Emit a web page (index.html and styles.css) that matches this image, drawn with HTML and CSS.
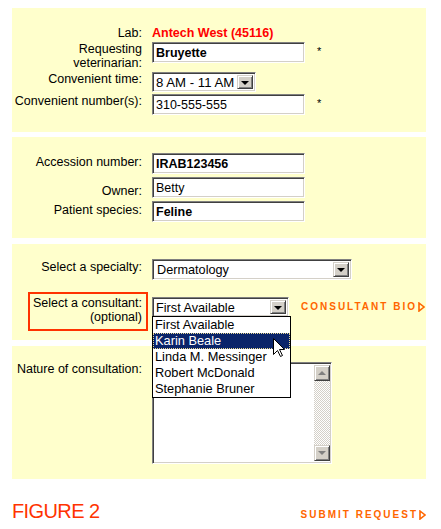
FILE: index.html
```html
<!DOCTYPE html>
<html>
<head>
<meta charset="utf-8">
<link rel="stylesheet" href="styles.css">
</head>
<body>
<div class="page">
  <div class="panel p1">
    <div class="row r-lab">
      <div class="lbl">Lab:</div>
      <div class="lab-val">Antech West (45116)</div>
    </div>
    <div class="row r-vet">
      <div class="lbl">Requesting<br>veterinarian:</div>
      <div class="fld"><input class="tb w153 bold" type="text" value="Bruyette" readonly><span class="req">*</span></div>
    </div>
    <div class="row r-time">
      <div class="lbl">Convenient time:</div>
      <div class="fld"><div class="sel w104"><span class="sel-txt">8 AM - 11 AM</span><span class="sel-btn"><i class="tri-down"></i></span></div></div>
    </div>
    <div class="row r-phone">
      <div class="lbl">Convenient number(s):</div>
      <div class="fld"><input class="tb w153" type="text" value="310-555-555" readonly><span class="req">*</span></div>
    </div>
  </div>

  <div class="panel p2">
    <div class="row r-in">
      <div class="lbl off2">Accession number:</div>
      <div class="fld"><input class="tb w153 bold" type="text" value="IRAB123456" readonly></div>
    </div>
    <div class="row r-in gap3">
      <div class="lbl off7">Owner:</div>
      <div class="fld"><input class="tb w153" type="text" value="Betty" readonly></div>
    </div>
    <div class="row r-in gap3">
      <div class="lbl off2">Patient species:</div>
      <div class="fld"><input class="tb w153 bold" type="text" value="Feline" readonly></div>
    </div>
  </div>

  <div class="panel p3">
    <div class="row r-spec">
      <div class="lbl off1">Select a specialty:</div>
      <div class="fld"><div class="sel w200 h21"><span class="sel-txt">Dermatology</span><span class="sel-btn"><i class="tri-down"></i></span></div></div>
    </div>
    <div class="row r-cons">
      <div class="lbl boxed">Select a consultant:<br>(optional)</div>
      <div class="fld cons-fld">
        <div class="sel w137 open">
          <span class="sel-txt">First Available</span><span class="sel-btn"><i class="tri-down"></i></span>
          <ul class="dropdown">
            <li>First Available</li>
            <li class="hl">Karin Beale</li>
            <li>Linda M. Messinger</li>
            <li>Robert McDonald</li>
            <li>Stephanie Bruner</li>
            <svg class="cursor" width="13" height="20" viewBox="0 0 13 20"><path d="M0.5 0.5 L0.5 16.5 L4.5 12.5 L7.5 18.5 L9.5 17.5 L6.5 11.5 L11.5 11.5 Z" fill="#fff" stroke="#000" stroke-width="1" stroke-linejoin="miter"/></svg>
          </ul>
        </div>
        <a class="olink bio">CONSULTANT BIO<svg class="arr" width="7" height="10" viewBox="0 0 7 10"><polygon points="1,1 6,5 1,9" fill="none" stroke="#ff6600" stroke-width="1.6"/></svg></a>
      </div>
    </div>
  </div>

  <div class="panel p4">
    <div class="row">
      <div class="lbl">Nature of consultation:</div>
      <div class="fld">
        <div class="ta">
          <div class="ta-body"></div>
          <div class="sb">
            <span class="sb-btn"><i class="tri-up-g"></i></span>
            <span class="sb-track"></span>
            <span class="sb-btn"><i class="tri-down-g"></i></span>
          </div>
        </div>
      </div>
    </div>
  </div>

  <div class="footer">
    <div class="fig">FIGURE 2</div>
    <a class="olink submit">SUBMIT REQUEST<svg class="arr" width="7" height="10" viewBox="0 0 7 10"><polygon points="1,1 6,5 1,9" fill="none" stroke="#ff6600" stroke-width="1.6"/></svg></a>
  </div>
</div>
</body>
</html>
```

FILE: styles.css
```css
html, body {
  margin: 0;
  padding: 0;
  background: #ffffff;
}
body {
  font-family: "Liberation Sans", Arial, sans-serif;
  font-size: 12.5px;
  line-height: 14px;
  color: #000;
}
.page {
  width: 414px;
  padding: 8px 0 0 12px;
}
.panel {
  background: #ffffcc;
  width: 414px;
  box-sizing: border-box;
}
.p1 { padding: 17px 0 17px; }
.p2 { margin-top: 5px; padding: 16px 0 16px; }
.p3 { margin-top: 6px; padding: 15px 0 9px; }
.p4 { margin-top: 6px; padding: 16px 0 15px; }

.row {
  display: flex;
  align-items: flex-start;
  gap: 4px;
}
.r-lab { padding-top: 1px; }
.r-vet { margin-top: 2px; }
.r-time { margin-top: 2px; }
.r-phone { margin-top: 2px; }
.gap3 { margin-top: 3px; }
.r-cons { margin-top: 12px; }

.lbl {
  width: 136px;
  flex: none;
  box-sizing: border-box;
  text-align: right;
  padding-right: 6px;
  white-space: nowrap;
}
.off1 { padding-top: 1px; }
.off2 { padding-top: 2px; }
.off7 { padding-top: 7px; }
.lbl.boxed {
  width: 120px;
  margin-left: 16px;
  border: 2px solid #ff3300;
  padding: 2px 4px 5px 0;
}

.lab-val {
  color: #ff0000;
  font-weight: bold;
}

.fld {
  display: flex;
  align-items: center;
}
.req {
  margin-left: 12px;
  font-size: 11px;
  line-height: 14px;
  position: relative;
  top: -2px;
}

/* inset text box */
.tb {
  box-sizing: border-box;
  height: 21px;
  margin: 0;
  padding: 1px 2px 0 3px;
  border: 1px solid;
  border-color: #808080 #ffffff #ffffff #808080;
  box-shadow: inset 1px 1px 0 #404040, inset -1px -1px 0 #d4d0c8;
  background: #fff;
  font-family: "Liberation Sans", Arial, sans-serif;
  font-size: 12.5px;
  color: #000;
  outline: none;
}
.tb.bold { font-weight: bold; }
.w153 { width: 153px; }

/* select */
.sel {
  position: relative;
  box-sizing: border-box;
  height: 20px;
  display: flex;
  align-items: stretch;
  border: 1px solid;
  border-color: #808080 #ffffff #ffffff #808080;
  box-shadow: inset 1px 1px 0 #404040, inset -1px -1px 0 #d4d0c8;
  background: #fff;
  padding: 2px;
  font-size: 12.7px;
}
.w104 { width: 104px; }
.w200 { width: 200px; }
.w137 { width: 137px; }
.h21 { height: 21px; }
.sel-txt {
  flex: 1;
  padding-left: 1px;
  line-height: 16px;
  white-space: nowrap;
  overflow: hidden;
}
.w104 .sel-txt { font-size: 13.2px; }
.h21 .sel-txt { line-height: 17px; padding-left: 2px; }
.sel-btn {
  width: 16px;
  flex: none;
  box-sizing: border-box;
  background: #d4d0c8;
  border: 1px solid;
  border-color: #d4d0c8 #404040 #404040 #d4d0c8;
  box-shadow: inset 1px 1px 0 #fff, inset -1px -1px 0 #808080;
  display: flex;
  align-items: center;
  justify-content: center;
}
.tri-down {
  width: 0;
  height: 0;
  border-left: 4px solid transparent;
  border-right: 4px solid transparent;
  border-top: 4px solid #000;
  margin-top: 1px;
}

.cons-fld { align-items: center; margin-top: 5px; }

/* open dropdown list (overlay) */
.dropdown {
  position: absolute;
  left: -1px;
  top: 100%;
  width: 139px;
  box-sizing: border-box;
  margin: 0;
  padding: 0;
  list-style: none;
  background: #fff;
  border: 1px solid #000;
  z-index: 5;
  font-size: 12.8px;
}
.dropdown li {
  height: 16px;
  line-height: 16px;
  padding-left: 2px;
  white-space: nowrap;
}
.dropdown li.hl {
  background: #0a246a;
  color: #fff;
  outline: 1px dotted #e8d890;
  outline-offset: -1px;
}
.cursor {
  position: absolute;
  left: 120px;
  top: 21px;
}

/* orange links */
.olink {
  color: #ff6600;
  font-weight: bold;
  font-size: 10px;
  letter-spacing: 2px;
  display: inline-flex;
  align-items: center;
  white-space: nowrap;
  text-decoration: none;
}
.bio { margin-left: 12px; }
.arr { margin-left: 1px; flex: none; }

/* textarea */
.ta {
  box-sizing: border-box;
  width: 180px;
  height: 102px;
  display: flex;
  border: 1px solid;
  border-color: #808080 #ffffff #ffffff #808080;
  box-shadow: inset 1px 1px 0 #404040, inset -1px -1px 0 #d4d0c8;
  background: #fff;
  padding: 2px 1px 2px 2px;
}
.ta-body { flex: 1; }
.sb {
  width: 16px;
  display: flex;
  flex-direction: column;
}
.sb-btn {
  height: 16px;
  flex: none;
  box-sizing: border-box;
  background: #d4d0c8;
  border: 1px solid;
  border-color: #d4d0c8 #404040 #404040 #d4d0c8;
  box-shadow: inset 1px 1px 0 #fff, inset -1px -1px 0 #808080;
  display: flex;
  align-items: center;
  justify-content: center;
}
.sb-track {
  flex: 1;
  background: repeating-conic-gradient(#d4d0c8 0 25%, #ffffff 0 50%) 0 0 / 2px 2px;
}
.tri-up-g {
  width: 0; height: 0;
  border-left: 4px solid transparent;
  border-right: 4px solid transparent;
  border-bottom: 4px solid #808080;
}
.tri-down-g {
  width: 0; height: 0;
  border-left: 4px solid transparent;
  border-right: 4px solid transparent;
  border-top: 4px solid #808080;
}

/* footer */
.footer {
  margin-top: 20px;
  width: 414px;
  display: flex;
  justify-content: space-between;
  align-items: baseline;
}
.fig {
  color: #ff3300;
  font-size: 20px;
  line-height: 24px;
  letter-spacing: -0.6px;
}
```
